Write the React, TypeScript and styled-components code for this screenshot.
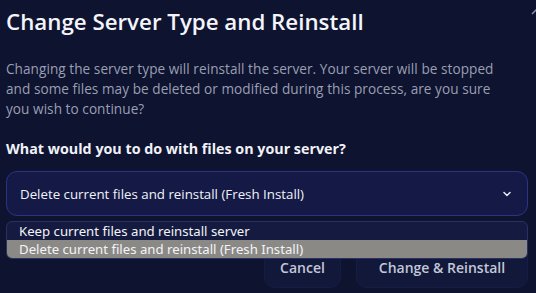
import { FC } from "react";
import styled, { createGlobalStyle } from "styled-components";

const GlobalStyle = createGlobalStyle`
  html, body {
    margin: 0;
    padding: 0;
    background: #0e1330;
    overflow: hidden;
  }
  body {
    font-family: "Open Sans", "Liberation Sans", sans-serif;
  }
`;

const Modal = styled.div`
  position: relative;
  width: 536px;
  height: 293px;
  padding: 8px 8px 0 6px;
  box-sizing: border-box;
  background: #0e1330;
`;

const Close = styled.div`
  position: absolute;
  top: -2px;
  right: -3px;
  width: 8px;
  height: 8px;
  color: #8d93b0;
`;

const Title = styled.h2`
  margin: 0;
  font-size: 22.3px;
  line-height: 28px;
  font-weight: 600;
  color: #f4f5fa;
`;

const Text = styled.p`
  margin: 23px 0 0;
  font-size: 13.6px;
  line-height: 20px;
  letter-spacing: 0.05px;
  color: #9a9fb2;
`;

const Question = styled.h3`
  margin: 20px 0 0;
  font-size: 14.3px;
  line-height: 20px;
  font-weight: 700;
  color: #f1f2f7;
`;

const SelectBox = styled.div`
  margin-top: 12px;
  height: 45px;
  display: flex;
  align-items: center;
  justify-content: space-between;
  padding: 0 14px 0 13px;
  border: 1px solid #2b3484;
  border-radius: 11px;
  background: #141a45;
  box-sizing: border-box;
  color: #f1f2f8;
  font-size: 13.3px;
`;

const Footer = styled.div`
  position: relative;
  margin-top: 5px;
  display: flex;
  justify-content: flex-end;
  gap: 15px;
  padding-top: 23px;
`;

const Button = styled.button<{ $w: number }>`
  width: ${(p) => p.$w}px;
  height: 44px;
  border: 1px solid #161d45;
  border-radius: 11px;
  background: #121839;
  color: #c3c7d8;
  font-family: "Open Sans", "Liberation Sans", sans-serif;
  font-size: 14px;
  font-weight: 600;
  padding-top: 3px;
`;

const Options = styled.ul`
  position: absolute;
  top: 0;
  left: 0;
  right: 0;
  margin: 0;
  padding: 0;
  list-style: none;
  border: 1px solid #2a3160;
  border-radius: 6px;
  background: #151b40;
  overflow: hidden;
  font-family: "Noto Sans", "Open Sans", sans-serif;
  font-size: 13.2px;
`;

const Option = styled.li<{ $active?: boolean }>`
  height: 18px;
  line-height: 18px;
  padding-left: 12px;
  color: #f4f4f6;
  background: ${(p) => (p.$active ? "#8a8986" : "transparent")};
`;

const App: FC = () => {
  return (
    <>
      <GlobalStyle />
      <Modal>
        <Close>
          <svg width="8" height="8" viewBox="0 0 8 8">
            <path d="M1 7 L7 1" stroke="currentColor" strokeWidth="1.5" />
          </svg>
        </Close>
        <Title>Change Server Type and Reinstall</Title>
        <Text>
          Changing the server type will reinstall the server. Your server will be stopped
          <br />
          and some files may be deleted or modified during this process, are you sure
          <br />
          you wish to continue?
        </Text>
        <Question>What would you to do with files on your server?</Question>
        <SelectBox>
          <span>Delete current files and reinstall (Fresh Install)</span>
          <svg width="12" height="12" viewBox="0 0 24 24" fill="none" stroke="#e6e8f2" strokeWidth="3" strokeLinecap="round" strokeLinejoin="round">
            <path d="M6 9l6 6 6-6" />
          </svg>
        </SelectBox>
        <Footer>
          <Options>
            <Option>Keep current files and reinstall server</Option>
            <Option $active>Delete current files and reinstall (Fresh Install)</Option>
          </Options>
          <Button $w={77}>Cancel</Button>
          <Button $w={172}>Change &amp; Reinstall</Button>
        </Footer>
      </Modal>
    </>
  );
};

export default App;
